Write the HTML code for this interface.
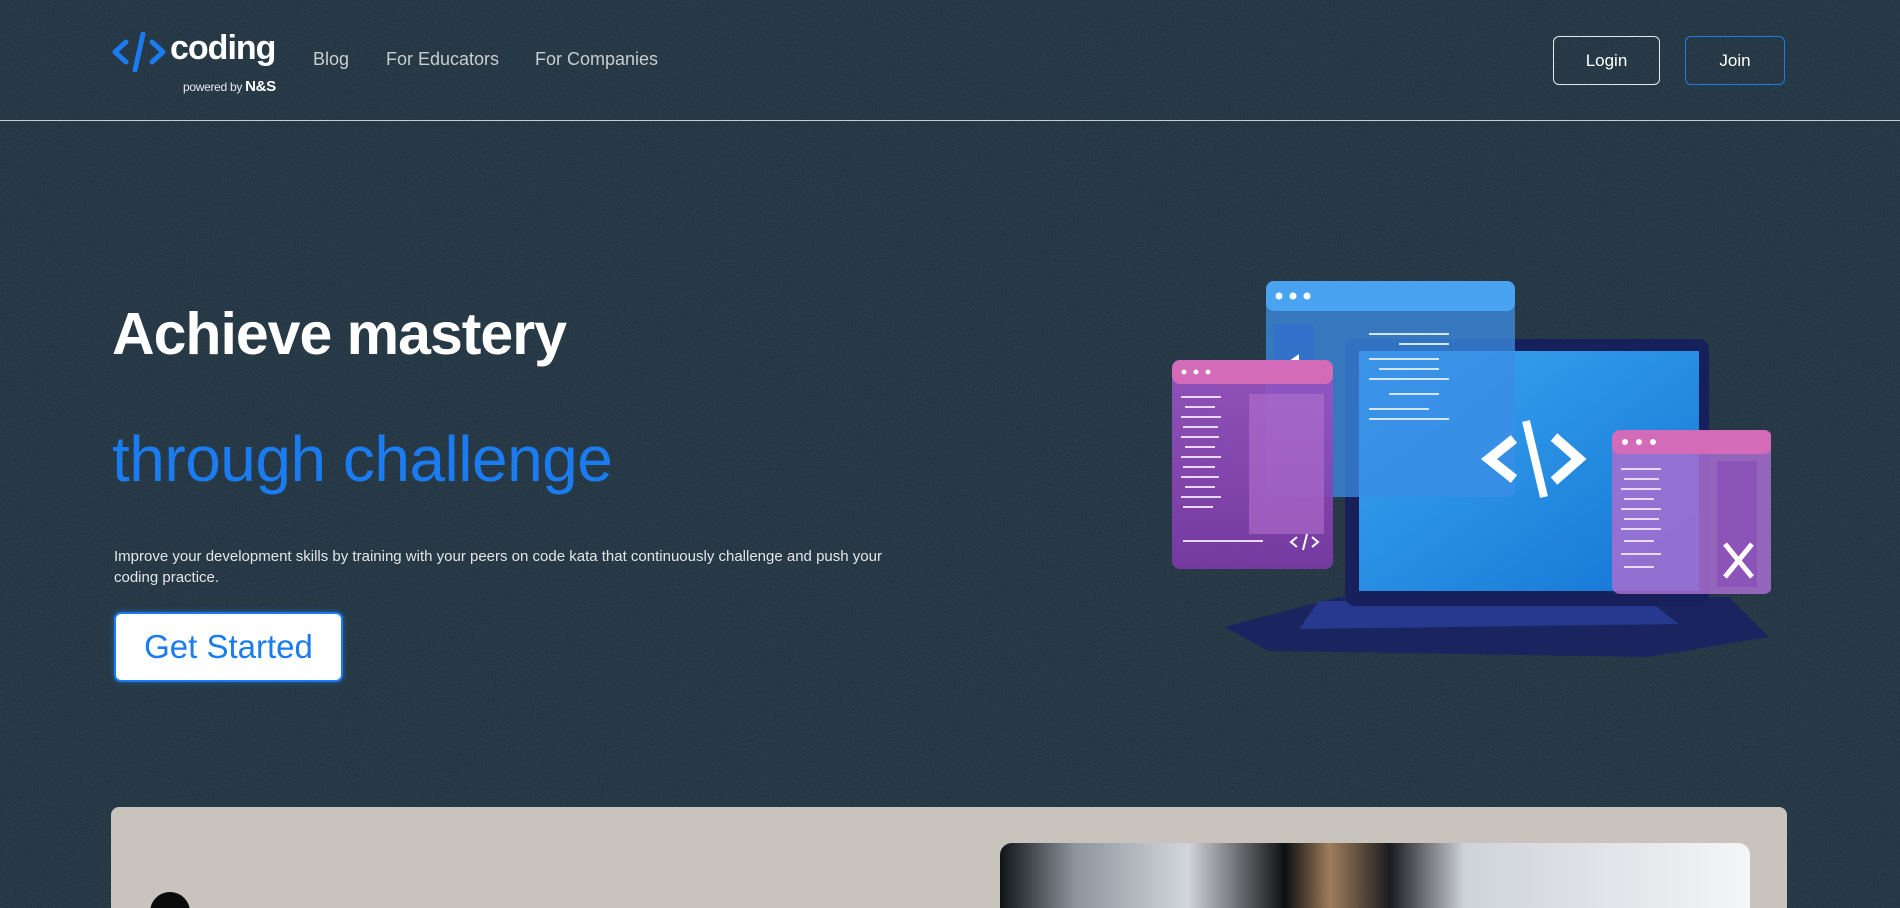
<!DOCTYPE html>
<html><head><meta charset="utf-8"><style>
*{margin:0;padding:0;box-sizing:border-box}
html,body{width:1900px;height:908px;overflow:hidden}
body{background:#1c2d39;font-family:"Liberation Sans",sans-serif;position:relative}
.noise{position:absolute;left:0;top:0}
.a{position:absolute}
.nav{color:#c9cdd1;font-size:18px;top:49px}
.btn{position:absolute;top:36px;height:49px;border-radius:6px;color:#fff;font-size:17px;display:flex;align-items:center;justify-content:center}
</style></head><body>
<svg class="noise" width="1900" height="908"><filter id="n"><feTurbulence type="fractalNoise" baseFrequency="0.9" numOctaves="2" seed="3"/><feColorMatrix values="0 0 0 0 0.35  0 0 0 0 0.5  0 0 0 0 0.6  0 0 0 0.22 0"/></filter><rect width="1900" height="908" fill="#182935"/><rect width="1900" height="908" filter="url(#n)"/></svg>

<svg class="a" style="left:112px;top:32px" width="54" height="40" viewBox="0 0 54 40"><path d="M14 10 L3 20 L14 30" stroke="#1a7cf0" stroke-width="5" fill="none" stroke-linecap="round" stroke-linejoin="round"/><path d="M31 2 L23 38" stroke="#1a7cf0" stroke-width="5" stroke-linecap="round"/><path d="M40 10 L51 20 L40 30" stroke="#1a7cf0" stroke-width="5" fill="none" stroke-linecap="round" stroke-linejoin="round"/></svg>
<div class="a" style="left:170px;top:29px;color:#fff;font-size:34px;font-weight:bold;letter-spacing:-1px">coding</div>
<div class="a" style="left:183px;top:78px;color:#e6e9ec;font-size:12px;letter-spacing:-0.3px">powered by <b style="font-size:15px;color:#fff">N&amp;S</b></div>
<div class="a nav" style="left:313px">Blog</div>
<div class="a nav" style="left:386px">For Educators</div>
<div class="a nav" style="left:535px">For Companies</div>
<div class="btn" style="left:1553px;width:107px;border:1px solid #e6e9ec">Login</div>
<div class="btn" style="left:1685px;width:100px;border:1.5px solid #1a7cf0">Join</div>
<div class="a" style="left:0;top:120px;width:1900px;height:1px;background:#c9cfd4"></div>

<div class="a" style="left:112px;top:300px;color:#fff;font-size:59px;font-weight:bold;letter-spacing:-1px">Achieve mastery</div>
<div class="a" style="left:112px;top:422px;color:#1a7cf0;font-size:64px;letter-spacing:-0.5px">through challenge</div>
<div class="a" style="left:114px;top:546px;width:790px;color:#e3e6e9;font-size:15px;line-height:21px">Improve your development skills by training with your peers on code kata that continuously challenge and push your coding practice.</div>
<div class="a" style="left:114px;top:612px;width:229px;height:70px;background:#fff;border:2px solid #1a7cf0;border-radius:7px;color:#1a7cf0;font-size:33px;display:flex;align-items:center;justify-content:center;box-shadow:0 0 6px rgba(26,124,240,.6)">Get Started</div>

<svg class="a" style="left:1169px;top:279px" width="602" height="381" viewBox="0 0 602 381">
<defs><linearGradient id="scr" x1="0" y1="0" x2="1" y2="1"><stop offset="0" stop-color="#3aa8f0"/><stop offset="1" stop-color="#1474d4"/></linearGradient>
<linearGradient id="pk" x1="0" y1="0" x2="0" y2="1"><stop offset="0" stop-color="#9a55c4"/><stop offset="1" stop-color="#7b3aa8"/></linearGradient></defs>
<path d="M55 348 L170 318 L560 318 L600 358 L480 378 L100 372 Z" fill="#1a2560"/>
<path d="M150 322 L480 322 L510 345 L130 350 Z" fill="#2b3f9a" opacity=".8"/>
<rect x="176" y="60" width="364" height="267" rx="10" fill="#17205a"/>
<rect x="190" y="72" width="340" height="240" fill="url(#scr)"/>
<rect x="97" y="2" width="249" height="216" rx="8" fill="#3c8ee6" opacity=".75"/>
<rect x="97" y="2" width="249" height="30" rx="8" fill="#4aa3f0"/>
<circle cx="110" cy="17" r="3.5" fill="#fff"/><circle cx="124" cy="17" r="3.5" fill="#fff"/><circle cx="138" cy="17" r="3.5" fill="#fff"/>
<rect x="105" y="45" width="40" height="110" fill="#2f6fcc" opacity=".8"/><path d="M130 75 L120 82 L130 89Z" fill="#fff"/>
<g stroke="#cfe6fb" stroke-width="2"><path d="M200 55h80M230 65h50M200 80h70M210 90h60M200 100h80M220 115h50M200 130h60M200 140h80"/></g>
<path d="M345 160 L320 180 L345 200" stroke="#fff" stroke-width="10" fill="none"/><path d="M357 142 L375 218" stroke="#fff" stroke-width="8"/><path d="M385 158 L410 180 L385 202" stroke="#fff" stroke-width="10" fill="none"/>
<rect x="3" y="81" width="161" height="209" rx="8" fill="url(#pk)" opacity=".92"/>
<rect x="3" y="81" width="161" height="24" rx="8" fill="#d46bb8"/>
<circle cx="15" cy="93" r="2.5" fill="#fff"/><circle cx="27" cy="93" r="2.5" fill="#fff"/><circle cx="39" cy="93" r="2.5" fill="#fff"/>
<rect x="80" y="115" width="75" height="140" fill="#b874d0" opacity=".55"/>
<g stroke="#e8d8f0" stroke-width="2"><path d="M12 118h40M16 128h30M12 138h40M14 148h35M12 158h38M16 168h30M12 178h40M14 188h32M12 198h38M16 208h30M12 218h40M14 228h30M14 262h80"/></g>
<path d="M128 258 L122 263 L128 268 M138 255 L134 271 M143 258 L149 263 L143 268" stroke="#fff" stroke-width="2" fill="none"/>
<rect x="443" y="151" width="160" height="164" rx="8" fill="#a86fd0" opacity=".85"/>
<rect x="443" y="151" width="160" height="24" rx="8" fill="#d46bb8"/>
<circle cx="456" cy="163" r="3" fill="#fff"/><circle cx="470" cy="163" r="3" fill="#fff"/><circle cx="484" cy="163" r="3" fill="#fff"/>
<rect x="548" y="182" width="40" height="126" fill="#8a4fb8" opacity=".8"/>
<path d="M556 265 L583 298 M583 265 L556 298" stroke="#fff" stroke-width="5"/>
<g stroke="#e8d8f0" stroke-width="2"><path d="M452 190h40M455 200h35M452 210h40M455 220h30M452 230h40M455 240h35M452 250h40M455 262h30M452 275h40M455 288h30"/></g>
</svg>

<div class="a" style="left:111px;top:807px;width:1676px;height:110px;background:#c8c4bd;border-radius:8px"></div>
<div class="a" style="left:1000px;top:843px;width:750px;height:80px;border-radius:12px;background:linear-gradient(90deg,#101418 0%,#8c949c 10%,#d3d7dc 25%,#0d1012 38%,#a07d5c 44%,#1a1c1f 52%,#cfd4da 62%,#e0e3e7 80%,#f4f6f8 100%)"></div>
<div class="a" style="left:150px;top:892px;width:40px;height:40px;border-radius:50%;background:#0b0b0b"></div>
</body></html>
